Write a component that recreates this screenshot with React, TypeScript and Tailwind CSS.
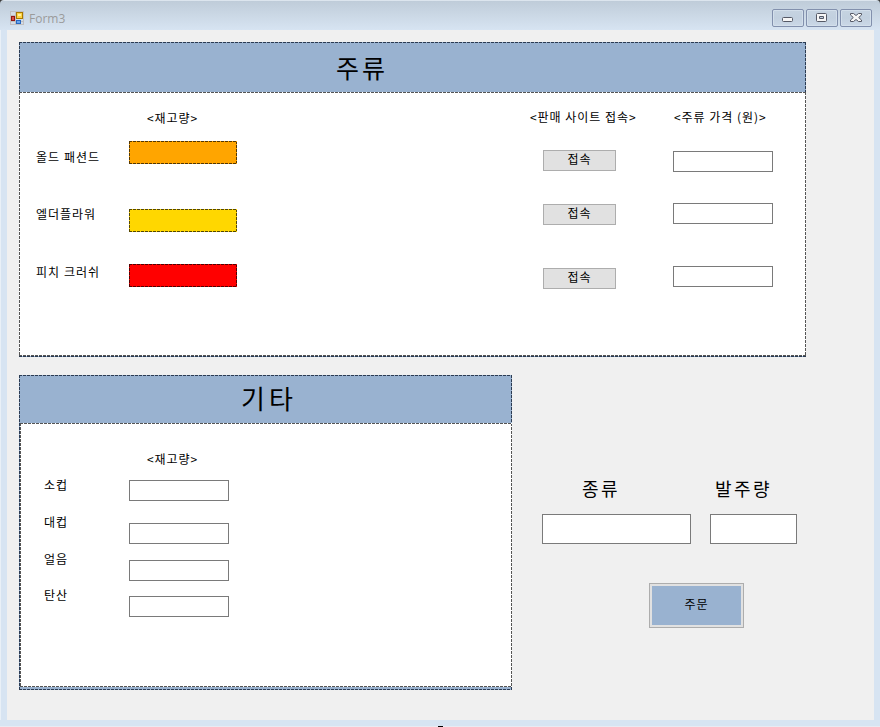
import type { ReactNode } from "react";

const dashed =
  "bg-[image:repeating-linear-gradient(90deg,var(--dash)_0_3px,var(--gap)_3px_4px),repeating-linear-gradient(90deg,var(--dash)_0_3px,var(--gap)_3px_4px),repeating-linear-gradient(180deg,var(--dash)_0_3px,var(--gap)_3px_4px),repeating-linear-gradient(180deg,var(--dash)_0_3px,var(--gap)_3px_4px)] bg-[length:100%_1px,100%_1px,1px_100%,1px_100%] bg-[position:left_top,left_bottom,left_top,right_top] bg-no-repeat";

const bluePanel = "bg-[#99b2d0] [--dash:#2b3b52] [--gap:#99b2d0]";
const whitePanel = "bg-white [--dash:#555555] [--gap:#ffffff]";

function Label({ className = "", children }: { className?: string; children: ReactNode }) {
  return (
    <div className={`h-3 whitespace-nowrap text-[12px] leading-3 tracking-[0.96px] text-black ${className}`}>
      {children}
    </div>
  );
}

function Title({ className = "", children }: { className?: string; children: ReactNode }) {
  return <div className={`whitespace-nowrap text-black ${className}`}>{children}</div>;
}

function TextBox({ className = "" }: { className?: string }) {
  return (
    <input
      type="text"
      className={`block rounded-none border border-[#7a7a7a] bg-white px-1 text-[12px] outline-none ${className}`}
    />
  );
}

function LinkButton({ className = "" }: { className?: string }) {
  return (
    <button
      className={`flex h-[21px] w-[73px] items-start justify-center border border-[#adadad] bg-[#e1e1e1] pt-[2px] ${className}`}
    >
      <Label>접속</Label>
    </button>
  );
}

function Swatch({ className = "" }: { className?: string }) {
  return <div className={`h-[23px] w-[108px] ${dashed} ${className}`} />;
}

function FormIcon() {
  return (
    <svg width="14" height="14" viewBox="0 0 14 14" shapeRendering="crispEdges">
      <rect x="0.5" y="0.5" width="13" height="13" fill="#d3dce6" stroke="#c0bfc1" />
      <path d="M5.5 0V14M0 10.5H14M0 4.5H6" stroke="#c0bfc1" />
      <rect x="6.5" y="1.5" width="6" height="6" fill="#fdd444" stroke="#a87900" />
      <rect x="8" y="3" width="3" height="2" fill="#fff0a0" />
      <rect x="1.5" y="5.5" width="3" height="4" fill="#d85048" stroke="#941610" />
      <rect x="6.5" y="9.5" width="4" height="3" fill="#6aa6ee" stroke="#2867c0" />
    </svg>
  );
}

function CaptionButton({ children }: { children: ReactNode }) {
  return (
    <button className="h-[18px] w-8 rounded-[2px] border border-[#8290ad] bg-[linear-gradient(#c6d3e1,#c2d0df_50%,#cbd8e7)] shadow-[inset_0_0_0_1px_#d3dfeb]">
      <svg width="30" height="16" viewBox="0 0 30 16" className="block">
        {children}
      </svg>
    </button>
  );
}

function TitleBar() {
  return (
    <div className="bg-[#3a3a3a]">
      <div className="flex h-[30px] justify-between rounded-t-[4px] bg-[linear-gradient(#dce5ee_0_1px,#bfccd9_1px,#d7e4f2)]">
        <div className="flex pt-[11px] pl-[10px]">
          <FormIcon />
          <span className="ml-[5px] h-4 font-['Open_Sans','Noto_Sans',sans-serif] text-[12px] leading-4 text-[#9b9b9b]">
            Form3
          </span>
        </div>
        <div className="flex gap-[2px] pt-[9px] pr-2">
          <CaptionButton>
            <rect x="9.5" y="7.5" width="10" height="4" rx="1" fill="#f6f6f6" stroke="#555966" />
          </CaptionButton>
          <CaptionButton>
            <path
              d="M10.5 3.5h8q1 0 1 1v6q0 1-1 1h-8q-1 0-1-1v-6q0-1 1-1zM12.5 6.5v2h4v-2z"
              fill="#f6f6f6"
              fillRule="evenodd"
              stroke="#555966"
            />
          </CaptionButton>
          <CaptionButton>
            <path
              d="M9.5 3.5h3l2.5 2 2.5-2h3v1.5l-2.8 2.5 2.8 2.5v1.5h-3l-2.5-2-2.5 2h-3v-1.5l2.8-2.5-2.8-2.5z"
              fill="#f6f6f6"
              stroke="#555966"
              strokeLinejoin="round"
            />
          </CaptionButton>
        </div>
      </div>
    </div>
  );
}

function LiquorPanel() {
  return (
    <section className={`h-[315px] w-[787px] ${bluePanel} ${dashed}`}>
      <div className="h-[50px]">
        <Title className="pt-[11px] pl-[317px] text-[25px] leading-7 tracking-[3px]">주류</Title>
      </div>
      <div className={`flex h-[264px] ${whitePanel} ${dashed}`}>
        <div className="w-[110px] pt-[59px] pl-[17px]">
          <Label className="tracking-[1.05px]">올드 패션드</Label>
          <Label className="mt-[45px]">엘더플라워</Label>
          <Label className="mt-[46px] tracking-[1.05px]">피치 크러쉬</Label>
        </div>
        <div className="w-[414px] pt-5">
          <Label className="pl-[18px]">&lt;재고량&gt;</Label>
          <Swatch className="mt-[17px] bg-[#ffa500] [--dash:#553700] [--gap:#ffa500]" />
          <Swatch className="mt-[45px] bg-[#ffd700] [--dash:#554700] [--gap:#ffd700]" />
          <Swatch className="mt-8 bg-[#ff0000] [--dash:#550000] [--gap:#ff0000]" />
        </div>
        <div className="w-[130px] pt-[19px]">
          <Label className="-ml-[13px]">&lt;판매 사이트 접속&gt;</Label>
          <LinkButton className="mt-[27px]" />
          <LinkButton className="mt-[33px]" />
          <LinkButton className="mt-[43px]" />
        </div>
        <div className="w-[110px] pt-[19px]">
          <Label className="pl-px">&lt;주류 가격 (원)&gt;</Label>
          <TextBox className="mt-7 h-[21px] w-[100px]" />
          <TextBox className="mt-[31px] h-[21px] w-[100px]" />
          <TextBox className="mt-[42px] h-[21px] w-[100px]" />
        </div>
      </div>
    </section>
  );
}

function SuppliesPanel() {
  return (
    <section className={`h-[315px] w-[493px] pl-px ${bluePanel} ${dashed}`}>
      <div className="h-12">
        <Title className="pt-[9px] pl-[221px] text-[26px] leading-7 tracking-[4px]">기타</Title>
      </div>
      <div className={`flex h-[264px] ${whitePanel} ${dashed}`}>
        <div className="w-[109px] pt-[56px] pl-6">
          <Label>소컵</Label>
          <Label className="mt-[25px]">대컵</Label>
          <Label className="mt-[25px]">얼음</Label>
          <Label className="mt-6">탄산</Label>
        </div>
        <div className="pt-[30px]">
          <Label className="pl-[18px]">&lt;재고량&gt;</Label>
          <TextBox className="mt-[15px] h-[21px] w-[100px]" />
          <TextBox className="mt-[22px] h-[21px] w-[100px]" />
          <TextBox className="mt-4 h-[21px] w-[100px]" />
          <TextBox className="mt-[15px] h-[21px] w-[100px]" />
        </div>
      </div>
    </section>
  );
}

function OrderForm() {
  return (
    <section className="pt-[104px] pl-[30px]">
      <div className="flex gap-[19px]">
        <div className="w-[149px]">
          <Title className="-mt-px pl-[40px] text-[18px] leading-5 tracking-[2.5px]">종류</Title>
          <TextBox className="mt-4 h-[30px] w-[149px]" />
        </div>
        <div className="w-[87px]">
          <Title className="-mt-px pl-[5px] text-[18px] leading-5 tracking-[2.5px]">발주량</Title>
          <TextBox className="mt-4 h-[30px] w-[87px]" />
        </div>
      </div>
      <button className="mt-[39px] ml-[107px] flex h-[45px] w-[95px] border border-[#adadad] bg-[#e1e1e1] p-[2px]">
        <span className="flex h-full w-full justify-center bg-[#99b2d0] pt-[12px]">
          <Label>주문</Label>
        </span>
      </button>
    </section>
  );
}

export default function App() {
  return (
    <main className="h-[727px] w-[880px] overflow-hidden bg-[#d7e4f2] font-['Noto_Sans_CJK_KR',sans-serif]">
      <TitleBar />
      <div className="h-[690px] border-r-[6px] border-l border-r-[#d7e4f2] border-l-[#e9f0f7] pl-[6px]">
        <div className="h-full bg-[#f0f0f0] pt-3 pl-3">
          <LiquorPanel />
          <div className="mt-[18px] flex">
            <SuppliesPanel />
            <OrderForm />
          </div>
        </div>
      </div>
      <div className="mt-[6px] h-px bg-[#e9eaf2] pl-[438px]">
        <div className="h-px w-[5px] bg-black" />
      </div>
    </main>
  );
}
